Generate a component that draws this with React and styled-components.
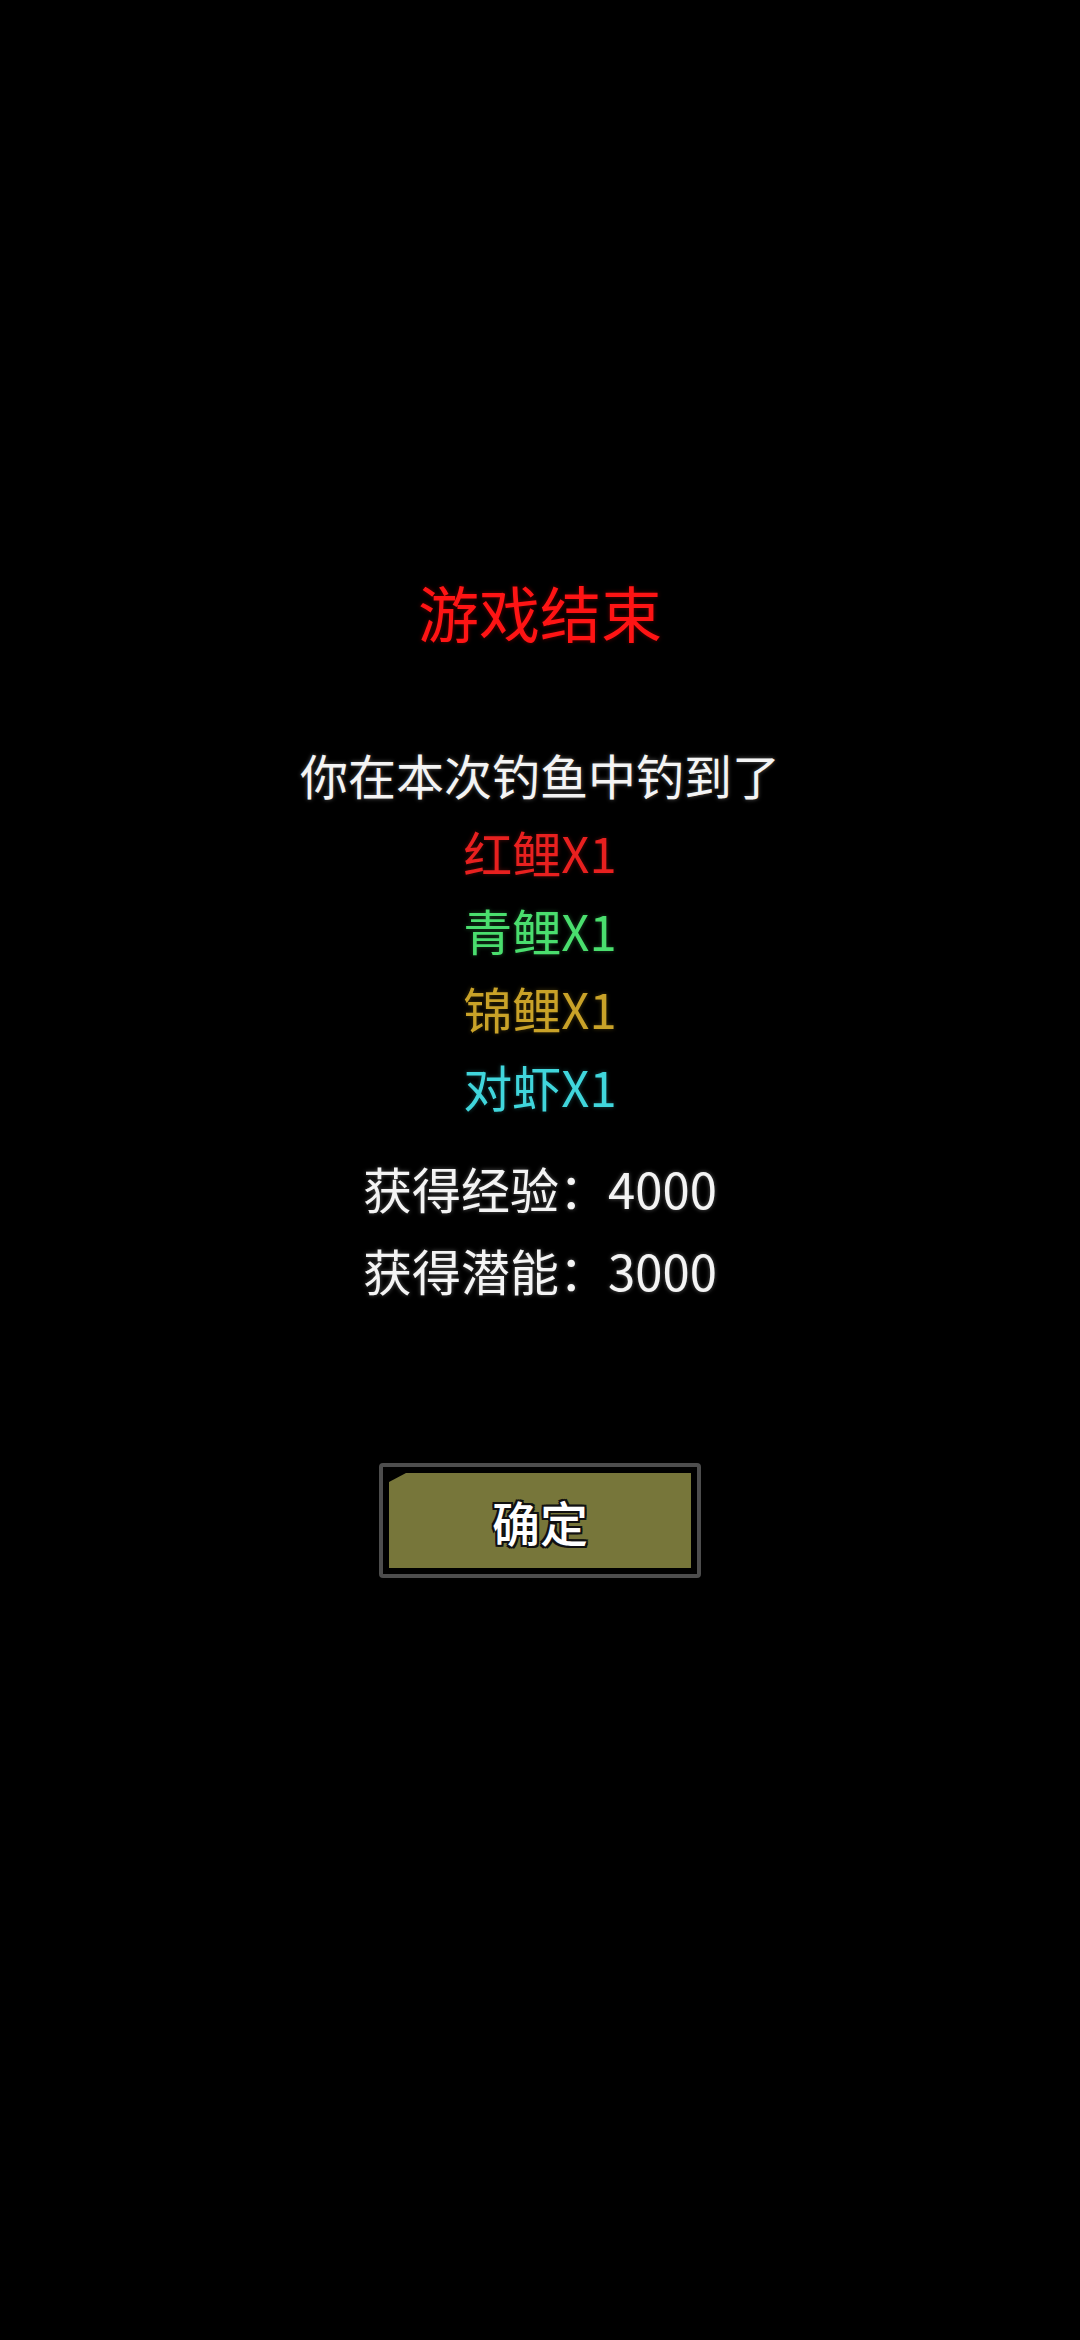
import React from "react";
import styled, { createGlobalStyle } from "styled-components";

const GlobalStyle = createGlobalStyle`
  html, body {
    margin: 0;
    padding: 0;
    background: #000;
  }
  body {
    font-family: "Noto Sans CJK SC", "Noto Sans", sans-serif;
  }
`;

const Screen = styled.div`
  width: 1080px;
  min-height: 2340px;
  background: #000;
  display: flex;
  flex-direction: column;
  align-items: center;
  padding-top: 576px;
  box-sizing: border-box;
`;

const Title = styled.h1`
  margin: 0;
  font-size: 61px;
  font-weight: 400;
  line-height: 72px;
  color: #ff1414;
  text-shadow: 0 0 4px rgba(110, 0, 0, 0.9);
`;

const Lead = styled.p`
  margin: 87px 0 0;
  font-size: 48px;
  line-height: 78px;
  color: #f4f4f4;
  text-shadow: 0 0 4px rgba(255, 255, 255, 0.35);
`;

const CatchList = styled.div`
  display: flex;
  flex-direction: column;
  align-items: center;
`;

const Catch = styled.div`
  font-size: 49px;
  line-height: 78px;
  color: ${({ color }) => color};
  text-shadow: 0 0 4px ${({ color }) => color}55;
`;

const Stats = styled.div`
  margin-top: 22px;
  display: flex;
  flex-direction: column;
  align-items: center;
`;

const StatRow = styled.div`
  font-size: 49px;
  line-height: 82px;
  color: #f4f4f4;
  text-shadow: 0 0 4px rgba(255, 255, 255, 0.35);
`;

const ConfirmFrame = styled.button`
  margin-top: 152px;
  padding: 6px;
  border: 4px solid #4d4d4d;
  border-radius: 4px;
  background: #000;
  cursor: pointer;
  display: block;
`;

const ConfirmFace = styled.div`
  width: 302px;
  height: 95px;
  background: #77763a;
  clip-path: polygon(0 9px, 17px 0, 100% 0, 100% 100%, 0 100%);
  display: flex;
  align-items: center;
  justify-content: center;
  font-family: "Noto Sans CJK SC", "Noto Sans", sans-serif;
  font-size: 48px;
  font-weight: 500;
  color: #fff;
  text-shadow:
    2px 0 0 #111, -2px 0 0 #111, 0 2px 0 #111, 0 -2px 0 #111,
    2px 2px 0 #111, -2px -2px 0 #111, 2px -2px 0 #111, -2px 2px 0 #111;
`;

const catches = [
  { name: "红鲤", count: 1, color: "#e8201f" },
  { name: "青鲤", count: 1, color: "#4ade6e" },
  { name: "锦鲤", count: 1, color: "#c9a228" },
  { name: "对虾", count: 1, color: "#40d6dc" },
];

export default function App() {
  return (
    <>
      <GlobalStyle />
      <Screen>
        <Title>游戏结束</Title>
        <Lead>你在本次钓鱼中钓到了</Lead>
        <CatchList>
          {catches.map((c) => (
            <Catch key={c.name} color={c.color}>
              {c.name}X{c.count}
            </Catch>
          ))}
        </CatchList>
        <Stats>
          <StatRow>获得经验：4000</StatRow>
          <StatRow>获得潜能：3000</StatRow>
        </Stats>
        <ConfirmFrame>
          <ConfirmFace>确定</ConfirmFace>
        </ConfirmFrame>
      </Screen>
    </>
  );
}
